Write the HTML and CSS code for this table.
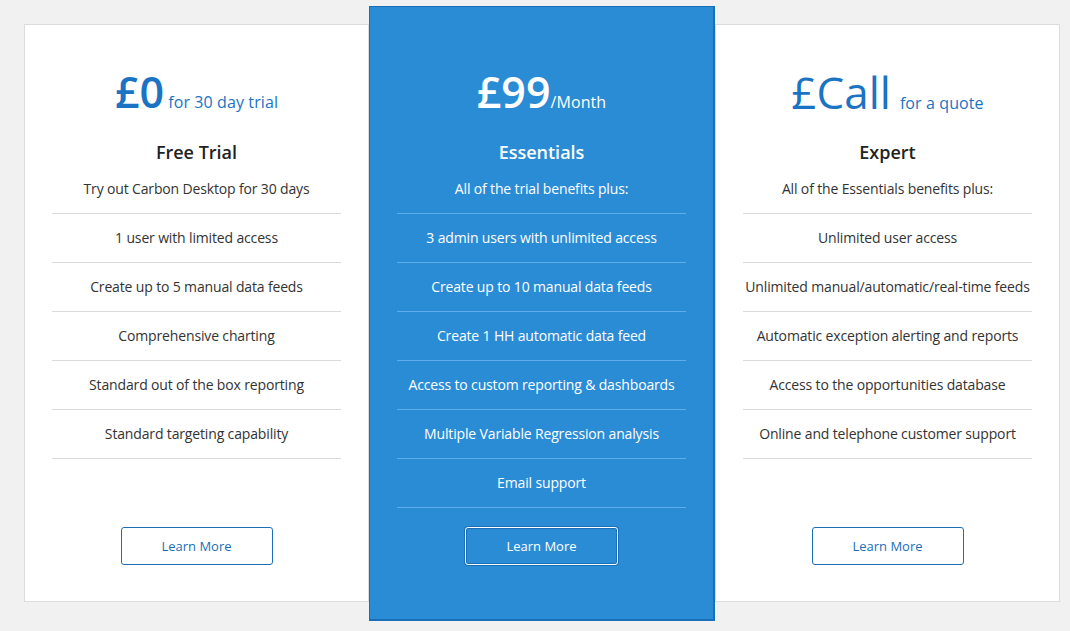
FILE: index.html
```html
<!DOCTYPE html>
<html lang="en">
<head>
<meta charset="utf-8">
<title>Pricing</title>
<link rel="stylesheet" href="styles.css">
</head>
<body>
<div class="plans">
  <div class="plan">
    <div class="price"><span class="amount">£0</span> <span class="per">for 30 day trial</span></div>
    <div class="name">Free Trial</div>
    <ul class="features">
      <li>Try out Carbon Desktop for 30 days</li>
      <li>1 user with limited access</li>
      <li>Create up to 5 manual data feeds</li>
      <li>Comprehensive charting</li>
      <li>Standard out of the box reporting</li>
      <li>Standard targeting capability</li>
    </ul>
    <a class="btn" href="#">Learn More</a>
  </div>
  <div class="plan featured">
    <div class="price"><span class="amount">£99</span><span class="per">/Month</span></div>
    <div class="name">Essentials</div>
    <ul class="features">
      <li>All of the trial benefits plus:</li>
      <li>3 admin users with unlimited access</li>
      <li>Create up to 10 manual data feeds</li>
      <li>Create 1 HH automatic data feed</li>
      <li>Access to custom reporting &amp; dashboards</li>
      <li>Multiple Variable Regression analysis</li>
      <li>Email support</li>
    </ul>
    <a class="btn" href="#">Learn More</a>
  </div>
  <div class="plan">
    <div class="price"><span class="amount light">£Call</span><span class="gap"></span><span class="per">for a quote</span></div>
    <div class="name">Expert</div>
    <ul class="features">
      <li>All of the Essentials benefits plus:</li>
      <li>Unlimited user access</li>
      <li>Unlimited manual/automatic/real-time feeds</li>
      <li>Automatic exception alerting and reports</li>
      <li>Access to the opportunities database</li>
      <li>Online and telephone customer support</li>
    </ul>
    <a class="btn" href="#">Learn More</a>
  </div>
</div>
</body>
</html>
```
FILE: styles.css
```css
* { box-sizing: border-box; }
html, body { margin: 0; padding: 0; }
body {
  background: #f1f1f1;
  font-family: "Open Sans", "Liberation Sans", sans-serif;
  color: #333;
  width: 1070px;
  height: 631px;
  overflow: hidden;
}
.plans {
  display: flex;
  align-items: flex-start;
  padding: 6px 0 0 24px;
}
.plan {
  width: 345px;
  height: 578px;
  margin-top: 18px;
  background: #fff;
  border: 1px solid #dcdcdc;
  display: flex;
  flex-direction: column;
  align-items: center;
  padding: 42px 27px 36px;
  text-align: center;
}
.plan.featured {
  width: 346px;
  height: 615px;
  margin-top: 0;
  background: #2b8cd6;
  border-style: solid;
  border-color: #1a6fba;
  border-width: 1px 2px 2px 1px;
  padding: 60px 27px 54px;
  color: #fff;
  position: relative;
  z-index: 1;
}
.price {
  height: 50px;
  line-height: 50px;
  color: #1a74c3;
  white-space: nowrap;
}
.featured .price { color: #fff; }
.amount {
  font-size: 43px;
  font-weight: 600;
}
.amount.light { font-weight: 400; font-size: 44px; }
.gap { display: inline-block; width: 9px; }
.per {
  font-size: 16px;
  letter-spacing: 0.1px;
}
.name {
  margin-top: 23px;
  font-size: 18px;
  line-height: 24px;
  font-weight: 600;
  color: #222;
}
.featured .name { color: #fff; }
.features {
  list-style: none;
  margin: 1px 0 0;
  padding: 0;
  width: 100%;
}
.features li {
  height: 49px;
  line-height: 48px;
  font-size: 14px;
  letter-spacing: -0.15px;
  border-bottom: 1px solid #dadada;
  white-space: nowrap;
}
.featured .features li {
  border-bottom-color: #5fadea;
  color: #fff;
}
.btn {
  margin-top: auto;
  width: 152px;
  height: 38px;
  line-height: 36px;
  border: 1px solid #1a6fb8;
  border-radius: 3px;
  font-size: 13px;
  color: #1a6fb8;
  text-decoration: none;
  display: block;
}
.featured .btn {
  border-color: #fff;
  color: #fff;
  box-shadow: 0 0 0 1px #1a6fb8, inset 0 0 0 1px #1a6fb8;
  width: 153px;
}
```
